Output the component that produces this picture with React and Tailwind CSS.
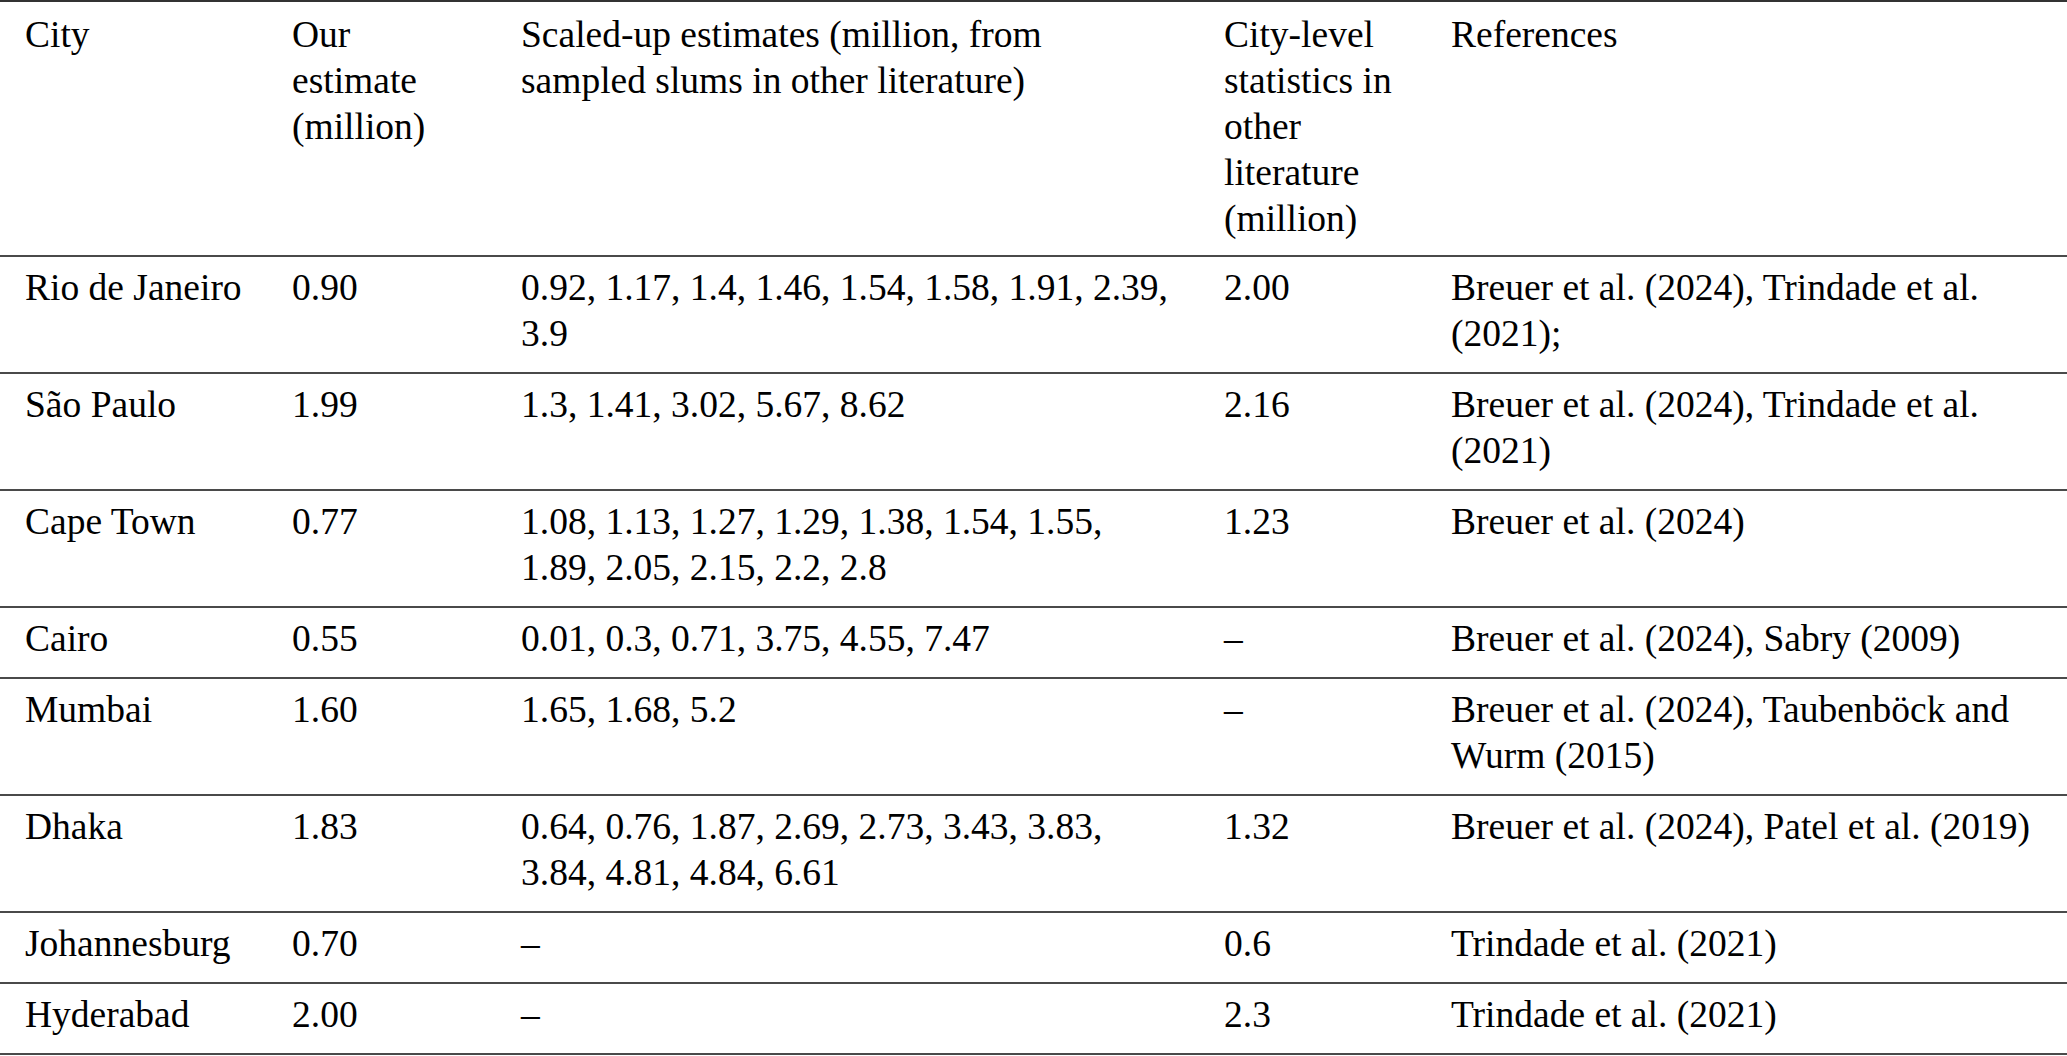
import React from "react";

const header = [
  "City",
  "Our\nestimate\n(million)",
  "Scaled-up estimates (million, from\nsampled slums in other literature)",
  "City-level\nstatistics in\nother\nliterature\n(million)",
  "References",
];

const rows = [
  ["Rio de Janeiro", "0.90", "0.92, 1.17, 1.4, 1.46, 1.54, 1.58, 1.91, 2.39,\n3.9", "2.00", "Breuer et al. (2024), Trindade et al.\n(2021);"],
  ["São Paulo", "1.99", "1.3, 1.41, 3.02, 5.67, 8.62", "2.16", "Breuer et al. (2024), Trindade et al.\n(2021)"],
  ["Cape Town", "0.77", "1.08, 1.13, 1.27, 1.29, 1.38, 1.54, 1.55,\n1.89, 2.05, 2.15, 2.2, 2.8", "1.23", "Breuer et al. (2024)"],
  ["Cairo", "0.55", "0.01, 0.3, 0.71, 3.75, 4.55, 7.47", "–", "Breuer et al. (2024), Sabry (2009)"],
  ["Mumbai", "1.60", "1.65, 1.68, 5.2", "–", "Breuer et al. (2024), Taubenböck and\nWurm (2015)"],
  ["Dhaka", "1.83", "0.64, 0.76, 1.87, 2.69, 2.73, 3.43, 3.83,\n3.84, 4.81, 4.84, 6.61", "1.32", "Breuer et al. (2024), Patel et al. (2019)"],
  ["Johannesburg", "0.70", "–", "0.6", "Trindade et al. (2021)"],
  ["Hyderabad", "2.00", "–", "2.3", "Trindade et al. (2021)"],
];

const grid = "grid grid-cols-[267px_229px_703px_227px_1fr] px-[25px]";

function Row({ cells, head }) {
  return (
    <div
      className={`${grid} border-b-2 border-[#4a4a4a] ${head ? "pt-[10px] pb-[13px]" : "pt-[8px] pb-[15px]"}`}
    >
      {cells.map((c, i) => (
        <div key={i} className="whitespace-pre-line">
          {c}
        </div>
      ))}
    </div>
  );
}

export default function App() {
  return (
    <div className="w-[2067px] h-[1056px] bg-white text-black text-[37.5px] leading-[46px] font-['Liberation_Serif','Times_New_Roman',serif]">
      <div className="border-t-2 border-[#333]">
        <Row cells={header} head />
        {rows.map((r) => (
          <Row key={r[0]} cells={r} />
        ))}
      </div>
    </div>
  );
}
